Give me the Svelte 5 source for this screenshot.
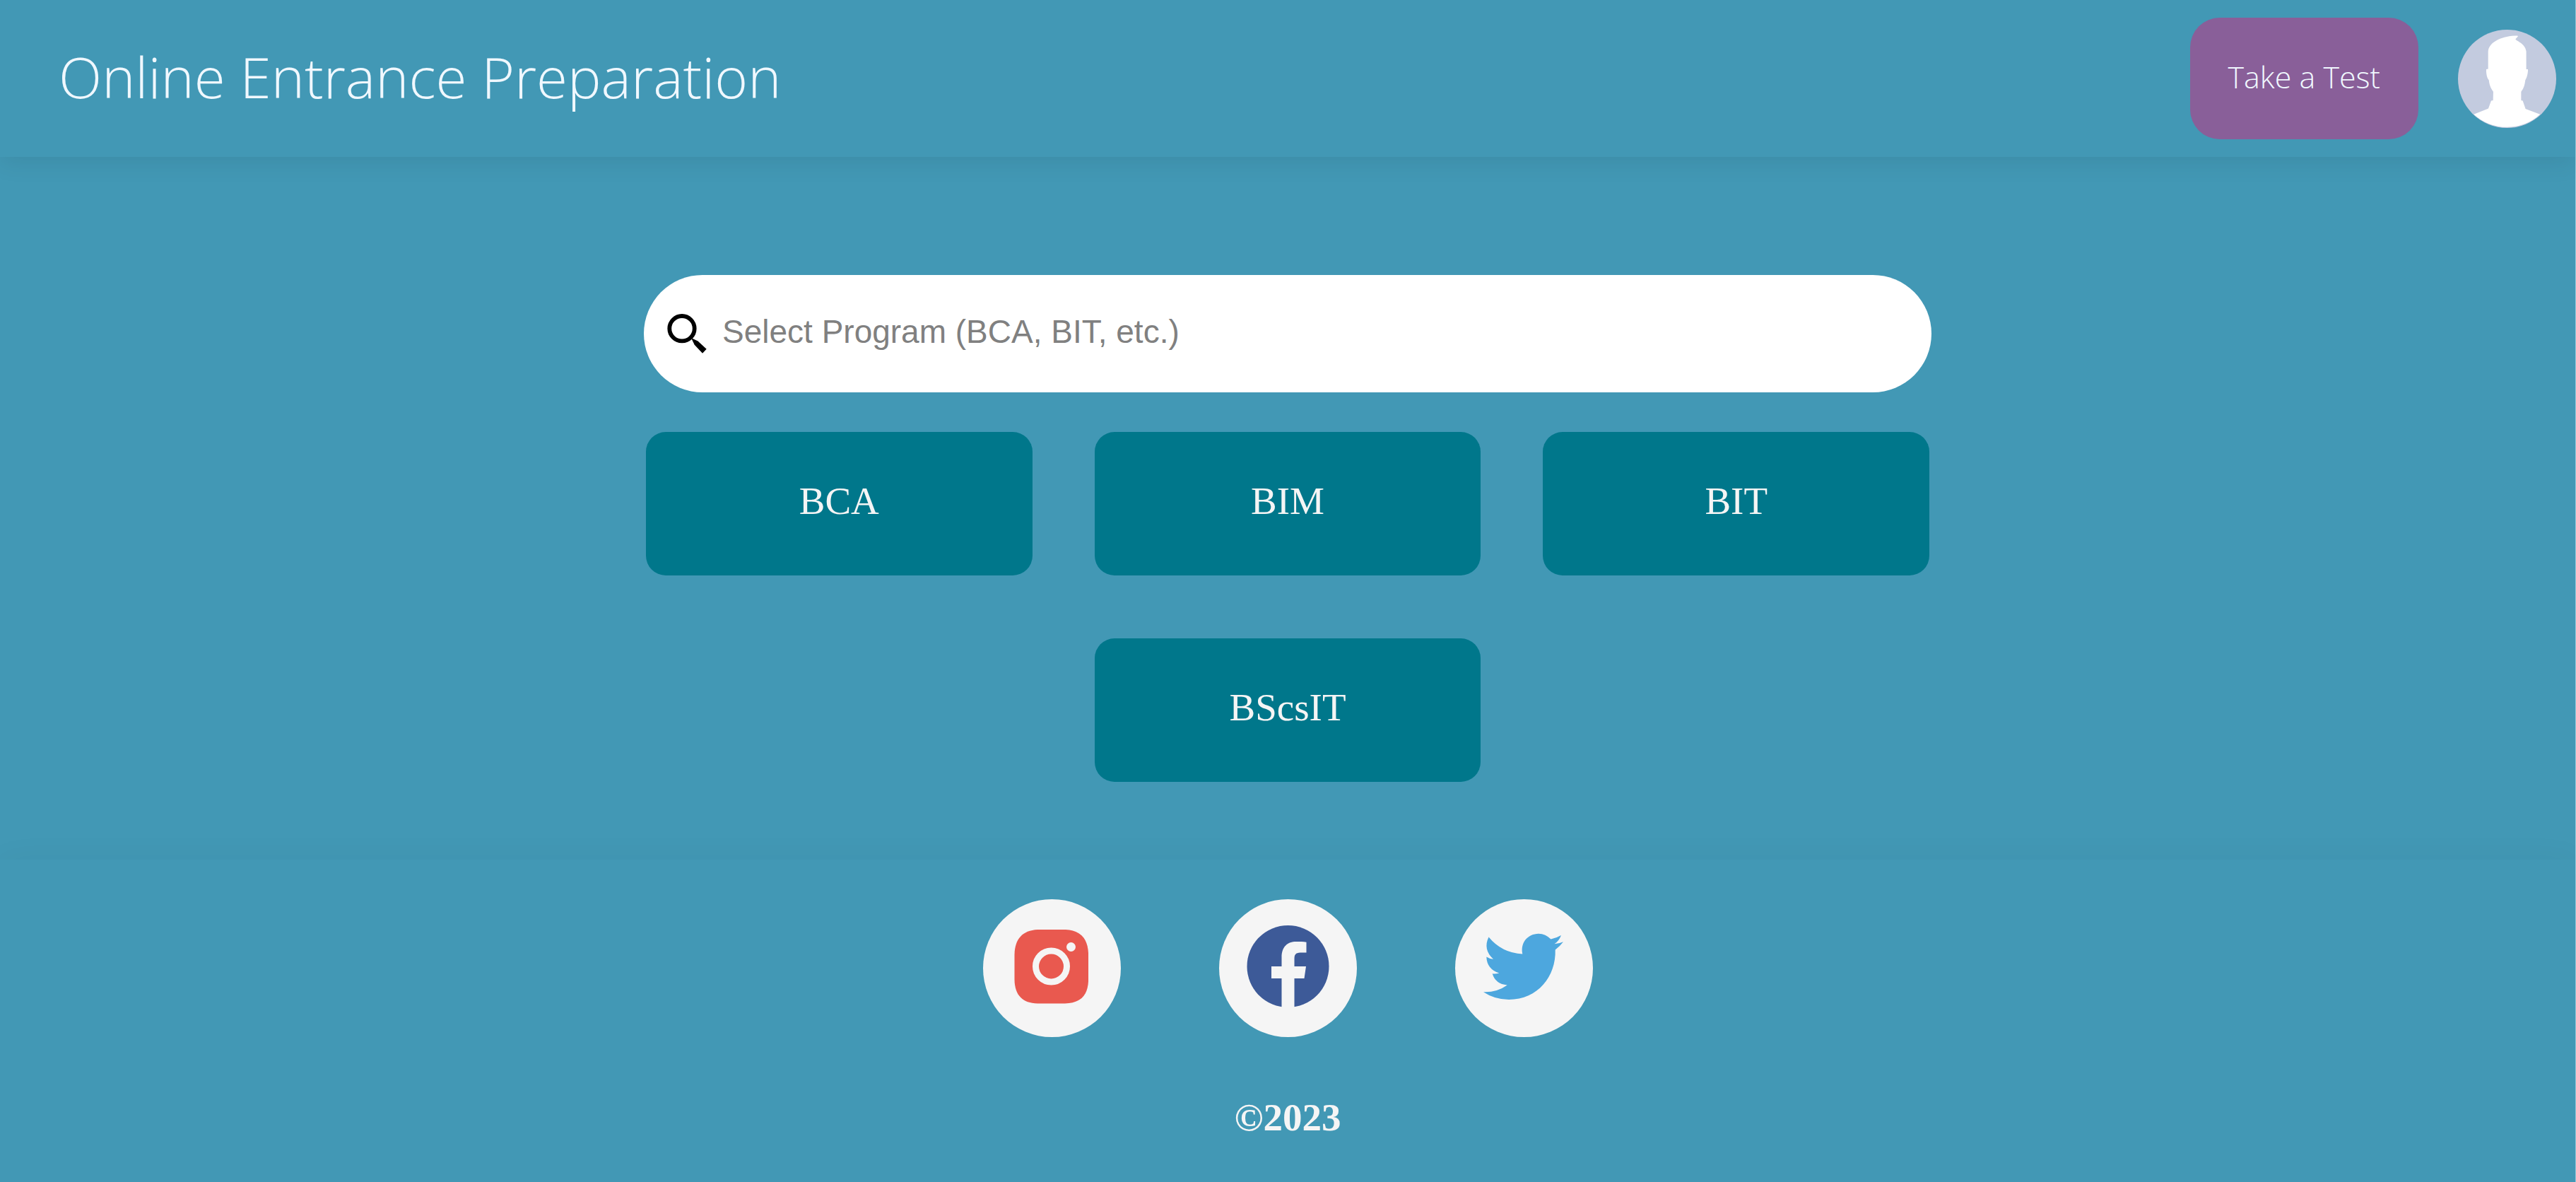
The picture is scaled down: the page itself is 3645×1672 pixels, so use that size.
<script lang="ts">
  const programs: string[] = ['BCA', 'BIM', 'BIT', 'BScsIT'];
</script>

<div class="page">
  <header>
    <h1>Online Entrance Preparation</h1>
    <div class="actions">
      <button class="test" type="button">Take a Test</button>
      <a class="avatar" href="#profile" aria-label="Profile">
        <svg viewBox="0 0 140 140">
          <circle cx="70" cy="70" r="70" fill="#c3cbdf" />
          <path fill="#fff" d="M43 56V31C44 18 62 9 83.700 8.500C86 8.500 85.500 9.500 85 10L82 13.300C82 16 96 19 97.300 31V56.300H99.700C100 62 98 69 96 71.700C95 79 94 83 90 88.300V100.700L92.300 101.300L96.300 112.700L117 120.500A70 70 0 0 1 22.500 120.500L43.300 112.300L47.300 101.300L50 100.700L50.300 88.300C46 82 45 79 44 71.700C41 69 40 61 40.300 56.300Z" />
        </svg>
      </a>
    </div>
  </header>

  <main>
    <label class="search">
      <svg viewBox="0 0 56 56" aria-hidden="true">
        <circle cx="21" cy="20.700" r="17.700" fill="none" stroke="#000" stroke-width="5.800" />
        <path d="M34 34L43.500 38.500L55.700 49.700L50 55.700L38.700 43.700Z" />
      </svg>
      <input type="text" placeholder="Select Program (BCA, BIT, etc.)" aria-label="Select Program" />
    </label>
    <nav class="programs">
      {#each programs as program}
        <a class="program" href="#{program}">{program}</a>
      {/each}
    </nav>
  </main>

  <footer>
    <div class="social">
      <a href="#instagram" aria-label="Instagram">
        <svg viewBox="0 0 195 195">
          <path fill="#e9594f" d="M44.500 78C45 56 56 44 77 43H117C138 44 148 56 149 76V116C148 136 138 147 116 147.500H77C56 147 45 136 44.500 114Z" />
          <circle cx="96.500" cy="95" r="22" fill="none" stroke="#f5f5f5" stroke-width="9" />
          <circle cx="124.500" cy="67.500" r="6.500" fill="#f5f5f5" />
        </svg>
      </a>
      <a href="#facebook" aria-label="Facebook">
        <svg viewBox="0 0 195 195">
          <circle cx="97.500" cy="95" r="58" fill="#3d5a98" />
          <path fill="#f5f5f5" d="M88.500 154V112H74V95H88.500V82C88.500 67 97 60 109 60C115 60 119 60 123.500 60.800V75.500H115C108 75.500 106.500 79 106.500 84V95H123L120.500 112H106.500V154Z" />
        </svg>
      </a>
      <a href="#twitter" aria-label="Twitter">
        <svg viewBox="0 0 195 195">
          <path fill="#4da7de" d="M40 131.300Q59 132 73.700 121.500Q57 120 52.700 105.300Q57 106 62.300 104.500Q45 99 44.300 81.500Q49 84.500 54 84.700Q39 71 47.500 53.500Q66 76 95.300 77.500C92 61 103 49 118 48.700Q128 49 135.500 56.500Q143 55 150 51Q147 59 140.500 63.300Q147 63 153 60.300Q148 67 141.700 71.500C143 109 117 142 76 142Q56 142 40 131.300Z" />
        </svg>
      </a>
    </div>
    <p>©2023</p>
  </footer>
</div>

<style>
  :global(body) {
    margin: 0;
    background: #4298b5;
  }
  .page {
    min-height: 100vh;
    box-sizing: border-box;
    border-right: 1px solid #9ccbdb;
    display: flex;
    flex-direction: column;
    font-family: "Liberation Serif", serif;
    font-size: 55px;
    line-height: 64px;
    color: #f5f5f5;
  }
  header {
    display: flex;
    align-items: center;
    justify-content: space-between;
    padding: 25px 27px 25px 83px;
    box-shadow: 0 8px 32px rgba(0, 0, 0, 0.08);
    color: aliceblue;
    font-family: "Open Sans", sans-serif;
  }
  h1 {
    margin: 0;
    padding-bottom: 6px;
    font-size: 80px;
    line-height: 116px;
    font-weight: 300;
  }
  .actions {
    display: flex;
    align-items: center;
    gap: 56px;
  }
  .test {
    padding: 52px 54px 56px;
    border: 0;
    border-radius: 42px;
    background: #895f99;
    color: aliceblue;
    font-family: inherit;
    font-size: 43px;
    line-height: 64px;
    font-weight: 300;
    cursor: pointer;
  }
  .avatar {
    width: 139px;
    height: 139px;
  }
  .avatar svg,
  .social svg {
    display: block;
    width: 100%;
    height: 100%;
  }
  main {
    flex: 1;
    display: flex;
    flex-direction: column;
    align-items: center;
    gap: 56px;
    padding: 167px 0 110px;
  }
  .search {
    box-sizing: border-box;
    width: 50%;
    height: 166px;
    padding: 0 33px;
    display: flex;
    align-items: center;
    gap: 22px;
    border-radius: 83px;
    background: #fff;
  }
  .search svg {
    width: 56px;
    height: 56px;
    flex: none;
  }
  input {
    flex: 1;
    min-width: 0;
    padding: 0 0 6px;
    border: 0;
    outline: 0;
    background: none;
    font-family: "Liberation Sans", sans-serif;
    font-size: 46px;
    line-height: 56px;
    color: #222;
  }
  input::placeholder {
    color: #808080;
    opacity: 1;
  }
  .programs {
    width: 100%;
    display: flex;
    flex-wrap: wrap;
    justify-content: center;
    gap: 89px 88px;
    padding: 0 24%;
    box-sizing: border-box;
  }
  .program {
    width: 15vw;
    box-sizing: border-box;
    padding: 66px 0 73px;
    border-radius: 28px;
    background: #00778b;
    color: inherit;
    text-align: center;
    text-decoration: none;
  }
  footer {
    display: flex;
    flex-direction: column;
    align-items: center;
    gap: 82px;
    padding: 56px 0 59px;
    box-shadow: 0 0 44px rgba(0, 0, 0, 0.04);
  }
  .social {
    display: flex;
    gap: 139px;
  }
  .social a {
    width: 195px;
    height: 195px;
    border-radius: 50%;
    background: #f5f5f5;
  }
  p {
    margin: 0;
    font-weight: 700;
  }
</style>
